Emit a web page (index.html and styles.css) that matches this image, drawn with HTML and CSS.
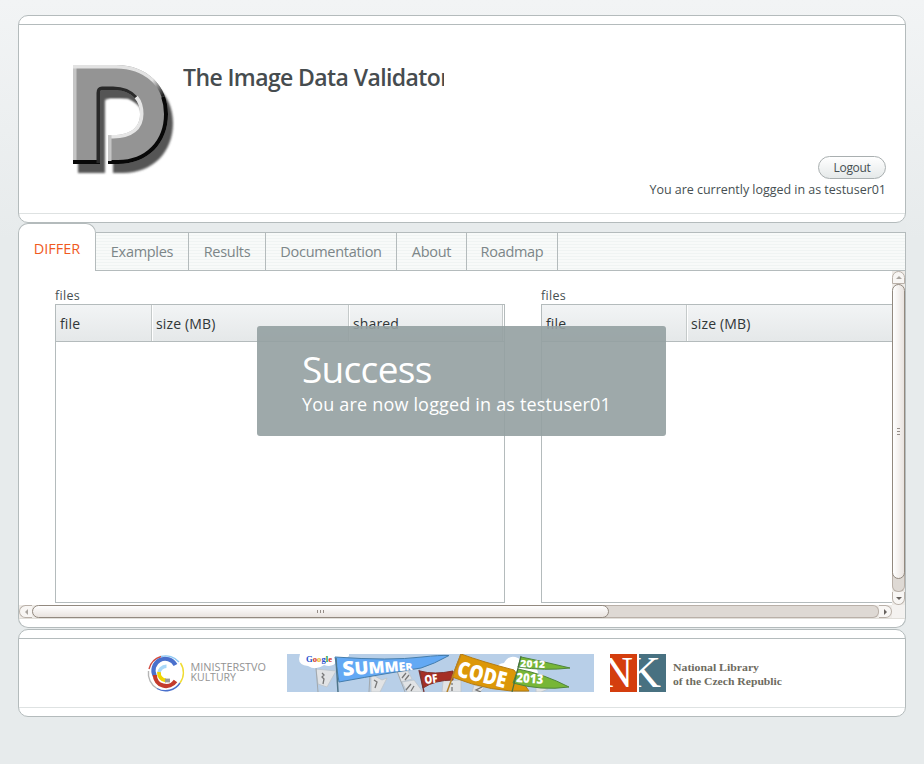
FILE: index.html
```html
<!DOCTYPE html>
<html lang="en">
<head>
<meta charset="utf-8">
<title>DIFFER</title>
<link rel="stylesheet" href="styles.css">
</head>
<body>
<header class="panel header">
  <div class="panel-body header-body">
    <svg class="logo" width="106" height="114" viewBox="71 63 106 114">
      <defs>
        <path id="mark" d="M73 65H116C147 65 168 86 168 114C168 143 148 164 118 164H108V135H113C131 135 140 127 140 114C140 98 129 90 113 90H102Q100 90 100 93V164H73Z"/>
        <clipPath id="markClip"><use href="#mark"/></clipPath>
        <filter id="soft" x="-10%" y="-10%" width="120%" height="120%"><feGaussianBlur stdDeviation="1"/></filter>
        <linearGradient id="rim" x1="0" y1="0" x2="1" y2="1"><stop offset=".1" stop-color="#e2e2e2"/><stop offset=".9" stop-color="#222"/></linearGradient>
      </defs>
      <use href="#mark" x="5" y="9" fill="#555" filter="url(#soft)"/>
      <use href="#mark" fill="#949494"/>
      <g clip-path="url(#markClip)" fill="none" stroke-width="7">
        <path d="M73 164V65" stroke="#c5c5c5"/>
        <path d="M73 65H116C131 65 144 70 153 78" stroke="#e2e2e2"/>
        <path d="M152 77Q161 85 165 96" stroke="url(#rim)"/>
        <path d="M165 96Q168 104 168 114C168 143 148 164 118 164H108" stroke="#080808" stroke-width="8"/>
        <path d="M71 164H102" stroke="#080808" stroke-width="8"/>
        <path d="M100 163V93Q100 90 102 90H113Q127 90 135 99" stroke="#292929"/>
        <path d="M135 98Q140 104 140 114C140 127 131 135 113 135H108" stroke="#e5e5e5"/>
        <path d="M108 135V161" stroke="#c5c5c5"/>
      </g>
      <path d="M109 134V99H128Q138 104 139 114C139 127 131 134 113 134Z" fill="#fff" filter="url(#soft)"/>
    </svg>
    <h1 class="title">The Image Data Validator</h1>
    <div class="user">
      <button class="logout">Logout</button>
      <span class="user-text">You are currently logged in as testuser01</span>
    </div>
  </div>
</header>

<main class="tabs">
  <nav class="tabbar">
    <a class="tab active"><span class="t-differ">DIFFER</span></a>
    <a class="tab w-examples">Examples</a>
    <a class="tab w-results">Results</a>
    <a class="tab w-docs">Documentation</a>
    <a class="tab w-about">About</a>
    <a class="tab w-roadmap">Roadmap</a>
    <span class="tab-rest"></span>
  </nav>
  <div class="scroll-area">
    <div class="viewport">
      <section class="files">
        <div class="caption">files</div>
        <div class="table">
          <div class="thead left-cols"><span>file</span><span>size (MB)</span><span>shared</span><span></span></div>
        </div>
      </section>
      <section class="files files-right">
        <div class="caption">files</div>
        <div class="table">
          <div class="thead right-cols"><span>file</span><span>size (MB)</span></div>
        </div>
      </section>
    </div>
    <div class="vbar">
      <i class="btn up"></i>
      <i class="thumb"><b></b></i>
      <i class="trough"></i>
      <i class="btn down"></i>
    </div>
    <div class="hbar">
      <i class="btn prev"></i>
      <i class="thumb"><b></b></i>
      <i class="trough"></i>
      <i class="btn next"></i>
    </div>
    <div class="corner"></div>
  </div>
</main>

<footer class="panel footer">
  <div class="panel-body sponsors">
    <svg width="122" height="40" viewBox="146 653 122 40">
      <g fill="none">
        <g stroke-width="1.4">
          <path d="M149 669A17.400 17.400 0 0 1 161 656.500" stroke="#d04b40"/>
          <path d="M161 656.500A17.400 17.400 0 0 1 179 662" stroke="#8cc8f4"/>
          <path d="M180.500 663A17.400 17.400 0 0 1 180 683" stroke="#f0dc32"/>
          <path d="M180 683A17.400 17.400 0 0 1 157 688.500" stroke="#4a70cc"/>
          <path d="M157 688.500A17.400 17.400 0 0 1 148.500 671" stroke="#b5b5b5"/>
        </g>
        <path d="M154.800 676A11.300 11.300 0 0 1 175.500 665" stroke="#4a70cc" stroke-width="4.200"/>
        <path d="M154.800 675A11.300 11.300 0 0 0 175.500 681" stroke="#c43b2c" stroke-width="4.200"/>
        <path d="M158.800 674A7.600 7.600 0 0 1 166.500 666.300" stroke="#a8d8f8" stroke-width="3.400"/>
        <path d="M159 672A7.600 7.600 0 0 0 166 680.500" stroke="#f0d500" stroke-width="3.800"/>
        <path d="M165 680.500H170" stroke="#999" stroke-width="3.800"/>
      </g>
      <g class="ministry">
        <text x="190.500" y="671" textLength="75.500" lengthAdjust="spacingAndGlyphs">MINISTERSTVO</text>
        <text x="190.500" y="680.500" textLength="45.500" lengthAdjust="spacingAndGlyphs">KULTURY</text>
      </g>
    </svg>
    <svg class="gsoc" width="307" height="38" viewBox="287 654 307 38">
      <path d="M287 654H594V692H287Z" fill="#b8cfe8"/>
      <g fill="#fff">
        <path d="M300 654H349V656Q344 661 337 661Q333 668 324 665Q316 671 308 666Q299 665 299 659Z"/>
        <path d="M493 671Q498 663 504 663Q509 654 518 658Q527 664 536 668Q541 675 533 681H509Z"/>
      </g>
      <g stroke="#bdc4ca" fill="#e1e3e5" stroke-width=".8">
        <path d="M316 669L336 671L327 687L318 684ZM371 674L382 680L387 678L380 692H371ZM397 672L408 671L412 679L401 682ZM402 682L414 680L423 692H407ZM443 681L461 680V692H442ZM474 685L484 688L480 692H472ZM536 686L548 689L541 692H536Z"/>
      </g>
      <g fill="none" stroke="#a2a8ad" stroke-width="1"><path d="M316 668L318 692M370 674L369 692M397 671L405 692"/></g>
      <g fill="none" stroke="#777" stroke-width="1.300">
        <path d="M322 673L324 675L322 677L324 679L323 684M374 680L377 682L375 688M402 678L406 673M405 680L409 675M406 690L411 684M411 691L414 686M452 683V685M452 687V691M482 687L476 690L481 692"/>
      </g>
      <path d="M335 657Q390 661 422 657Q440 655 449 655.500Q434 664 421 668Q394 672 339 682Z" fill="#63a9f4" stroke="#447dad"/>
      <path d="M336 658L338 692" stroke="#4f7589" stroke-width="1.500"/>
      <path d="M420 671Q434 675 453 671V680Q435 680 423 688Z" fill="#a52f25" stroke="#7f302c"/>
      <path d="M419 670L424 692" stroke="#733" stroke-width="1.300"/>
      <path d="M461 654Q483 662 514 670L529 691Q492 693 452 677Z" fill="#dc9708" stroke="#b37c16"/>
      <path d="M461 654L447 692" stroke="#b68228" stroke-width="1.500"/>
      <path d="M521 657Q541 661 570 668Q545 671 518 667ZM518 669Q544 674 569 687Q541 691 513 683Z" fill="#77b637" stroke="#4f863d"/>
      <path d="M521 656L512 692" stroke="#477240" stroke-width="1.200"/>
      <g class="bunting" fill="#fff">
        <text transform="translate(343 676) rotate(-5)" font-size="20" textLength="70" lengthAdjust="spacingAndGlyphs">S<tspan font-size="18">U</tspan><tspan font-size="16">M</tspan><tspan font-size="14">M</tspan><tspan font-size="12">E</tspan><tspan font-size="10">R</tspan></text>
        <text transform="translate(425 684) rotate(-7)" font-size="12" textLength="13" lengthAdjust="spacingAndGlyphs">OF</text>
        <text transform="translate(456 676) rotate(14)" font-size="22" textLength="50" lengthAdjust="spacingAndGlyphs">CODE</text>
        <text transform="translate(520 667) rotate(2)" font-size="10" textLength="25" lengthAdjust="spacingAndGlyphs">2012</text>
        <text transform="translate(516 682) rotate(4)" font-size="13" textLength="27" lengthAdjust="spacingAndGlyphs">2013</text>
      </g>
      <text class="google" x="306" y="662" textLength="26" lengthAdjust="spacingAndGlyphs"><tspan fill="#2850ce">G</tspan><tspan fill="#d2312a">o</tspan><tspan fill="#e8b414">o</tspan><tspan fill="#2850ce">g</tspan><tspan fill="#20983b">l</tspan><tspan fill="#d2312a">e</tspan></text>
    </svg>
    <svg width="174" height="38" viewBox="610 654 174 38">
      <path d="M610 654H637V692H610Z" fill="#d43e0e"/>
      <path d="M639 654H666V692H639Z" fill="#487181"/>
      <g class="nk" fill="#fff">
        <svg x="610" y="654" width="27" height="38"><text x="-8" y="33" textLength="31" lengthAdjust="spacingAndGlyphs">N</text></svg>
        <svg x="639" y="654" width="27" height="38"><text x="-12" y="33" textLength="34" lengthAdjust="spacingAndGlyphs">K</text></svg>
      </g>
      <g class="library">
        <text x="673" y="671" textLength="86" lengthAdjust="spacingAndGlyphs">National Library</text>
        <text x="673" y="684.500" textLength="109" lengthAdjust="spacingAndGlyphs">of the Czech Republic</text>
      </g>
    </svg>
  </div>
</footer>

<div class="notice" role="status">
  <h2>Success</h2>
  <p>You are now logged in as testuser01</p>
</div>
</body>
</html>
```
FILE: styles.css
```css
* { box-sizing: border-box; }
html { background: #e7ebec; }
body {
  margin: 0;
  height: 764px;
  padding: 15px 18px 0;
  overflow: hidden;
  background: linear-gradient(#f2f4f5 0, #eceff0 130px, #e7ebec 240px);
  color: #464f52;
  font: 13px/18px "Open Sans", "Noto Sans", sans-serif;
}
.panel {
  background: #fff;
  border: 1px solid #b4bbbc;
  border-radius: 10px;
  padding: 8px 0;
}
.panel-body {
  height: 100%;
  border-top: 1px solid #b4bbbc;
  border-bottom: 1px solid #dee2e2;
}
.header { height: 208px; }
.header-body { display: flex; padding: 38px 19px 0 52px; }
.logo { flex: none; }
.title {
  width: 261px;
  height: 34px;
  margin: 0 0 0 6px;
  overflow: hidden;
  white-space: nowrap;
  color: #464c4f;
  font-size: 23px;
  font-weight: 600;
  line-height: 28px;
  letter-spacing: -.6px;
}
.user {
  display: flex;
  flex: 1;
  flex-direction: column;
  align-items: flex-end;
  padding-top: 93px;
  white-space: nowrap;
}
.logout {
  width: 68px;
  height: 23px;
  padding: 0;
  border: 1px solid #a9afb0;
  border-radius: 12px;
  background: linear-gradient(#fff, #e5e9e9);
  color: #464f52;
  font: 12px/19px "Open Sans", sans-serif;
  letter-spacing: -.35px;
}
.user-text { margin-top: 2px; font-size: 12.5px; letter-spacing: -.03px; }

.tabs {
  height: 405px;
  margin-bottom: 1px;
  border: 1px solid #b4bbbc;
  border-top: 0;
  border-radius: 0 0 10px 10px;
  background: #fff;
}
.tabbar {
  display: flex;
  align-items: flex-end;
  height: 48px;
  margin: 0 -1px;
  background: #e7ebec;
  color: #7c8688;
  font-size: 14.500px;
  letter-spacing: -.3px;
}
.tab, .tab-rest {
  height: 39px;
  border: solid #b4bbbc;
  border-width: 1px 1px 1px 0;
  background: repeating-linear-gradient(#f8faf9 0 2px, #f0f4f3 2px 3px);
  line-height: 37px;
  text-align: center;
  white-space: nowrap;
}
.tab-rest { flex: 1; }
.tab.active {
  width: 78px;
  height: 48px;
  border-width: 1px 1px 0;
  border-radius: 10px 10px 0 0;
  background: #fff;
  color: #f05a1e;
  line-height: 49px;
}
.t-differ { letter-spacing: 0; }
.w-examples { width: 93px; }
.w-results { width: 77px; }
.w-docs { width: 131px; }
.w-about { width: 70px; }
.w-roadmap { width: 91px; }

.scroll-area {
  display: grid;
  grid-template-columns: 873px 13px;
  grid-template-rows: 334px 14px;
}
.viewport {
  display: flex;
  gap: 36px;
  padding: 16px 0 0 36px;
  overflow: hidden;
}
.files { flex: none; width: 450px; }
.caption { height: 17px; line-height: 17px; font-size: 12.500px; letter-spacing: .3px; }
.table { height: 299px; border: 1px solid #b4bbbc; }
.thead {
  display: grid;
  height: 37px;
  border-bottom: 1px solid #b4bbbc;
  background: linear-gradient(#f2f4f5, #e5e8e9);
  color: #303638;
  font-size: 14px;
  line-height: 38px;
  letter-spacing: .15px;
  white-space: nowrap;
}
.thead span { height: 36px; padding-left: 4px; }
.thead span + span { border-left: 1px solid #c5caca; box-shadow: inset 1px 0 #fff; }
.left-cols { grid-template-columns: 95px 197px 154px 2px; }
.right-cols { grid-template-columns: 144px 1fr; }

.vbar, .hbar { display: flex; }
.vbar { flex-direction: column; background: #eeebe7; }
.hbar { border-bottom: 1px solid #e1dfda; background: #eeebe7; }
.vbar i, .hbar i { display: flex; align-items: center; justify-content: center; border: 1px solid #b9b0a8; }
.vbar .btn { height: 13px; background: #f8f6f4; }
.vbar .up { border-radius: 7px 7px 0 0; }
.vbar .down { border-radius: 0 0 7px 7px; }
.vbar .thumb { height: 295px; border-color: #92897f; border-radius: 7px; background: linear-gradient(90deg, #fff, #e9e3df); }
.vbar .trough { flex: 1; margin-top: -7px; border-top: 0; border-radius: 0 0 6px 6px; background: #ded9d4; }
.vbar .down { border-top: 0; }
.vbar .thumb { position: relative; z-index: 1; }
.vbar .thumb b { width: 3px; height: 7px; background: repeating-linear-gradient(#958d87 0 1px, transparent 1px 3px); }
.hbar .btn { width: 13px; background: #f8f6f4; }
.hbar .prev { border-right: 0; border-radius: 7px 0 0 7px; }
.hbar .next { border-left: 0; border-radius: 0 7px 7px 0; }
.hbar .thumb { position: relative; z-index: 1; width: 577px; border-color: #92897f; border-radius: 7px; background: linear-gradient(#fff, #e9e3df); }
.hbar .trough { flex: 1; margin-left: -7px; border-left: 0; border-radius: 0 6px 6px 0; background: #ded9d4; }
.hbar .thumb b { width: 7px; height: 3px; background: repeating-linear-gradient(90deg, #958d87 0 1px, transparent 1px 3px); }
.btn::after { content: ""; border: 3px solid transparent; }
.up::after { border-top: 0; border-bottom-color: #aaa5a0; }
.down::after { border-bottom: 0; border-top-color: #68635f; }
.prev::after { border-left: 0; border-right-color: #aaa5a0; }
.next::after { border-right: 0; border-left-color: #68635f; }
.corner { border-bottom: 1px solid #e1dfda; background: #f4f2f0; }

.footer { height: 88px; }
.sponsors { display: flex; padding: 14px 0 0 127px; }
.sponsors svg { flex: none; }
.sponsors > svg:first-child { margin-right: 19px; }
.gsoc { margin: 1px 16px 0 0; }
.sponsors > svg:last-child { margin-top: 1px; }
.ministry { fill: #929292; font: 10px "Open Sans", sans-serif; }
.bunting { font-family: "Open Sans", sans-serif; font-weight: 800; }
.google { font: 9px "Liberation Serif", serif; font-weight: bold; }
.nk { font: 44px "Liberation Serif", serif; }
.library { fill: #6e6c5f; font: bold 11px "Liberation Serif", serif; }

.notice {
  position: absolute;
  z-index: 5;
  top: 326px;
  left: 257px;
  width: 409px;
  height: 110px;
  padding: 20px 45px;
  border-radius: 3px;
  background: rgba(148, 160, 162, .91);
  color: #fff;
  white-space: nowrap;
}
.notice h2 { margin: 0; font-size: 37px; font-weight: 400; line-height: 46px; letter-spacing: -.7px; }
.notice p { margin: 0; font-size: 18px; line-height: 25px; letter-spacing: .18px; }
```
